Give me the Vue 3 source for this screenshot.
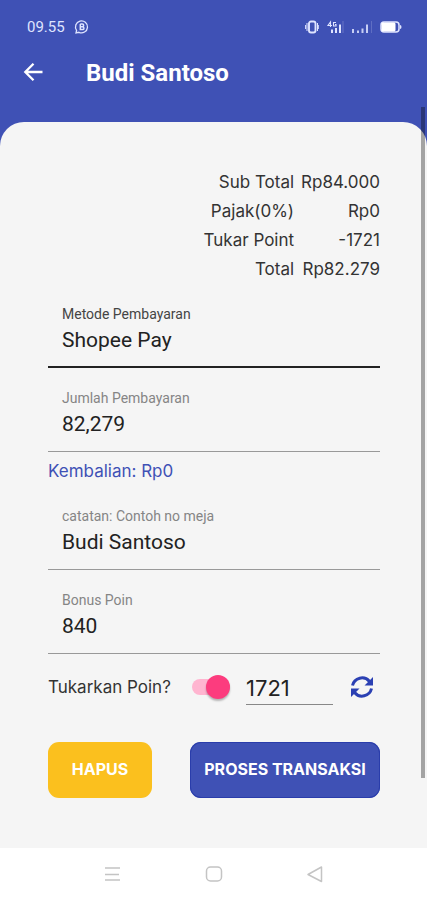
<script setup>
import { ref } from 'vue'

const totals = [
  { label: 'Sub Total', value: 'Rp84.000' },
  { label: 'Pajak(0%)', value: 'Rp0' },
  { label: 'Tukar Point', value: '-1721' },
  { label: 'Total', value: 'Rp82.279' },
]
const method = ref('Shopee Pay')
const amount = ref('82,279')
const note = ref('Budi Santoso')
const bonus = ref('840')
const redeem = ref(true)
const points = ref('1721')
</script>

<template>
  <div class="screen">
    <div class="status">
      <span class="clock">09.55</span>
      <svg class="chat" viewBox="0 0 16 16" width="16" height="16" fill="none" stroke="currentColor">
        <path d="M2 14 2.600 11.300A6 6 0 1 1 5 13.300Z" stroke-width="1.300" />
        <path d="M6.300 5h2a1.300 1.300 0 0 1 0 2.700h-2m2.200 0a1.400 1.400 0 0 1 0 2.900H6.300V5" stroke-width="1.500" />
      </svg>
      <div class="indicators">
        <svg viewBox="0 0 14 14" width="14" height="14" fill="none" stroke="currentColor">
          <rect x="4" y="1.500" width="6.500" height="11" rx="2" stroke-width="1.900" />
          <path d="M2 3v8M12.500 3v8M.6 5v4M13.700 5v4" stroke-width="1" />
        </svg>
        <svg viewBox="0 0 18 14" width="18" height="14" fill="none" stroke="currentColor">
          <path d="M4.500 7V2L2 5.500h4M10 2.500H7.500v3.500H10V4.500H9" stroke-width="1.100" />
          <path d="M6 9.500v3.500M10 8v5M14 4.500v8.500" stroke-width="2" />
          <path d="M17 1v12" stroke-width="1" opacity=".25" />
        </svg>
        <svg viewBox="0 0 22 14" width="22" height="14" fill="none" stroke="currentColor">
          <path d="M2 9v4M7 10.500v2.500M11.500 8.500v4.500M16 4.500v8.500" stroke-width="2" opacity=".85" />
          <path d="M20.500 1v12" stroke-width="1" opacity=".2" />
        </svg>
        <svg viewBox="0 0 22 14" width="22" height="14">
          <rect x="1" y="2" width="18" height="10" rx="3" fill="none" stroke="currentColor" stroke-width="1.500" />
          <rect x="1.500" y="2.500" width="14" height="9" rx="1.500" fill="#fff" />
          <path d="M20 5q1.500 0 1.500 2T20 9z" fill="currentColor" />
        </svg>
      </div>
    </div>

    <header class="bar">
      <button class="icon-btn" type="button" aria-label="Kembali">
        <svg viewBox="0 0 20 20" width="20" height="20" fill="none" stroke="currentColor" stroke-width="2.300">
          <path d="M19.500 9H2.500M10.500 .8 2.300 9l8.200 8.200" />
        </svg>
      </button>
      <h1>Budi Santoso</h1>
    </header>

    <main class="sheet">
      <table class="totals">
        <tbody>
          <tr v-for="row in totals" :key="row.label">
            <th scope="row">{{ row.label }}</th>
            <td>{{ row.value }}</td>
          </tr>
        </tbody>
      </table>

      <div class="field focused">
        <label for="method">Metode Pembayaran</label>
        <input id="method" v-model="method" type="text" />
      </div>
      <div class="field">
        <label for="amount">Jumlah Pembayaran</label>
        <input id="amount" v-model="amount" type="text" />
      </div>
      <p class="change">Kembalian: Rp0</p>
      <div class="field">
        <label for="note">catatan: Contoh no meja</label>
        <input id="note" v-model="note" type="text" />
      </div>
      <div class="field">
        <label for="bonus">Bonus Poin</label>
        <input id="bonus" v-model="bonus" type="text" />
      </div>

      <div class="redeem">
        <label for="redeem">Tukarkan Poin?</label>
        <input id="redeem" v-model="redeem" class="switch" type="checkbox" role="switch" />
        <input v-model="points" class="points" type="text" aria-label="Jumlah poin" />
        <button class="icon-btn sync" type="button" aria-label="Muat ulang">
          <svg viewBox="0 0 24 24" width="24" height="24" fill="none" stroke="currentColor" stroke-width="3">
            <path d="M2.500 10.500A9.700 9.700 0 0 1 19.500 6.500M21.500 13.500A9.700 9.700 0 0 1 4.500 17.500" />
            <path d="M23 2v8.500h-8.500zM1 22v-8.500h8.500z" fill="currentColor" stroke="none" />
          </svg>
        </button>
      </div>

      <div class="actions">
        <button class="btn delete" type="button">HAPUS</button>
        <button class="btn process" type="button">PROSES TRANSAKSI</button>
      </div>
    </main>

    <nav class="system">
      <button class="icon-btn" type="button" aria-label="Aplikasi terbaru">
        <svg viewBox="0 0 18 18" width="18" height="18" fill="none" stroke="currentColor" stroke-width="1.500">
          <path d="M1 3h15M1 9.500h14M1 15h15" />
        </svg>
      </button>
      <button class="icon-btn" type="button" aria-label="Beranda">
        <svg viewBox="0 0 18 18" width="18" height="18" fill="none" stroke="currentColor" stroke-width="1.500">
          <rect x="1.500" y="2" width="15" height="14" rx="4" />
        </svg>
      </button>
      <button class="icon-btn" type="button" aria-label="Kembali ke layar sebelumnya">
        <svg viewBox="0 0 18 18" width="18" height="18" fill="none" stroke="currentColor" stroke-width="1.500" stroke-linejoin="round">
          <path d="M15.500 2v14.500L2 9.500z" />
        </svg>
      </button>
    </nav>
    <div class="scrollbar"></div>
  </div>
</template>

<style>
body {
  margin: 0;
}
</style>

<style scoped>
.screen {
  position: relative;
  display: flex;
  flex-direction: column;
  min-height: 100vh;
  background: #3f51b5;
  color: #333;
  font-family: Inter, "Noto Sans", sans-serif;
}
.screen * {
  box-sizing: border-box;
}
svg {
  display: block;
}
.status {
  display: flex;
  align-items: center;
  gap: 9px;
  height: 54px;
  padding: 0 25px 0 27px;
  color: #dfe4ff;
}
.clock {
  font-family: Roboto, sans-serif;
  font-size: 15px;
}
.indicators {
  display: flex;
  align-items: center;
  gap: 7px;
  margin-left: auto;
}
.icon-btn {
  padding: 0;
  border: 0;
  background: none;
  color: inherit;
}
.bar {
  display: flex;
  align-items: center;
  gap: 43px;
  height: 68px;
  padding: 0 23px 30px;
  color: #fff;
}
h1 {
  margin: 0;
  font-family: Roboto, sans-serif;
  font-size: 24px;
  font-weight: 700;
  line-height: 32px;
}
.sheet {
  flex: 1;
  padding: 46px 47px 50px 48px;
  border-radius: 24px 24px 0 0;
  background: #f5f5f5;
}
.totals {
  margin-left: auto;
  border-collapse: collapse;
  font-size: 17px;
  line-height: 29px;
  text-align: right;
}
.totals th,
.totals td {
  padding: 0;
  font-weight: 400;
}
.totals th {
  padding-right: 7px;
}
.field {
  display: flex;
  flex-direction: column;
  height: 68px;
  margin-top: 16px;
  padding: 5px 14px 0;
  border-bottom: 1px solid #999;
  font-family: Roboto, sans-serif;
}
.field label {
  color: #858585;
  font-size: 14px;
  line-height: 18px;
}
.field input {
  width: 100%;
  height: 34px;
  padding: 0;
  border: 0;
  outline: 0;
  background: none;
  color: #222;
  font: 21px Roboto, sans-serif;
}
.focused {
  border-bottom: 2px solid #222;
}
.focused label {
  color: #444;
}
.change {
  margin: 7px 0 0;
  color: #3f51b5;
  font-size: 17px;
  line-height: 24px;
}
.change + .field {
  margin-top: 19px;
}
.redeem {
  display: flex;
  align-items: center;
  height: 36px;
  margin-top: 15px;
}
.redeem label {
  flex: 1;
  font-size: 17px;
  white-space: nowrap;
}
.switch {
  appearance: none;
  display: flex;
  align-items: center;
  width: 38px;
  height: 16px;
  margin: 0 16px 0 0;
  border-radius: 8px;
  background: #ccc;
}
.switch::before {
  content: "";
  flex: none;
  width: 24px;
  height: 24px;
  border-radius: 50%;
  background: #fff;
  box-shadow: 0 2px 2px #0004;
}
.switch:checked {
  justify-content: flex-end;
  background: #ffb5d0;
}
.switch:checked::before {
  background: #fc3c7e;
}
.points {
  width: 87px;
  height: 36px;
  padding: 2px 0 0;
  border: 0;
  border-bottom: 1px solid #888;
  border-radius: 0;
  background: none;
  color: #222;
  font: 22px Inter, sans-serif;
}
.sync {
  margin: 0 6px 0 17px;
  color: #2b40b3;
}
.actions {
  display: flex;
  gap: 38px;
  margin-top: 37px;
}
.btn {
  height: 56px;
  padding: 0 0 2px;
  border: 0;
  border-radius: 11px;
  color: #fff;
  font: 700 16px Inter, sans-serif;
  white-space: nowrap;
}
.delete {
  flex: 104;
  background: #fbc01e;
}
.process {
  flex: 190;
  background: #3f51b5;
  box-shadow: inset 0 0 0 1px #2a3dab;
}
.system {
  display: flex;
  align-items: center;
  justify-content: center;
  gap: 83px;
  height: 52px;
  background: #fff;
  color: #c4c4c4;
}
.scrollbar {
  position: absolute;
  top: 107px;
  right: 2px;
  bottom: 122px;
  width: 4px;
  background: #0005;
}
</style>
